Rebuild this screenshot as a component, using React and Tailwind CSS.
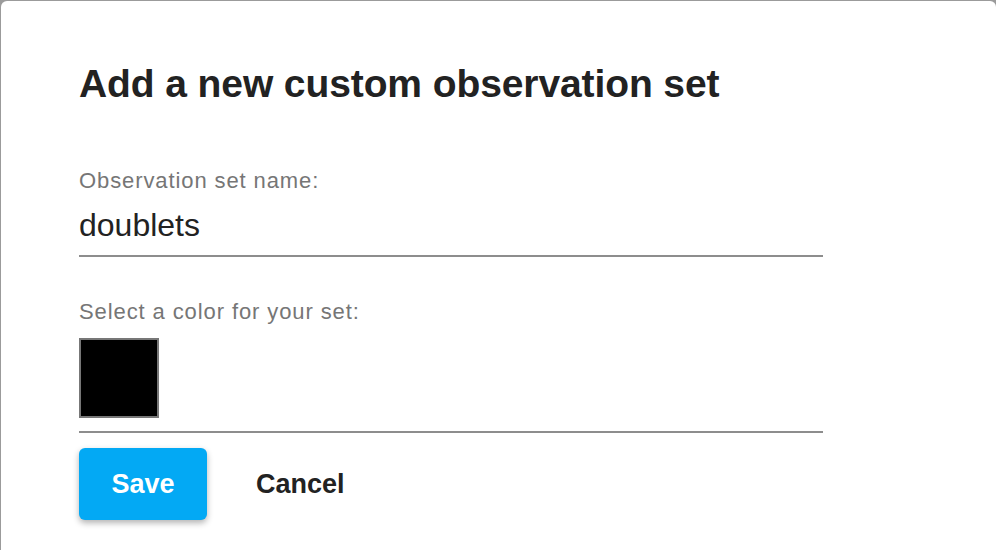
export default function App() {
  return (
    <div className="w-[996px] h-[550px] overflow-hidden bg-[#9b9b9b] pt-px pl-px" style={{ fontFamily: '"Liberation Sans", Arial, sans-serif' }}>
      <div className="w-[995px] h-[560px] bg-white rounded-[6px] pl-[78px] pt-[58px]">
        <h1 className="text-[39px] leading-[50px] font-bold text-[#222] tracking-[-0.1px]">Add a new custom observation set</h1>
        <div className="w-[744px] mt-[59px]">
          <div className="text-[22px] leading-[26px] text-[#767676] tracking-[0.9px]">Observation set name:</div>
          <div className="text-[32px] leading-[40px] text-[#222] mt-[11px] pb-[10px] border-b-2 border-[#8d8d8d]">doublets</div>
          <div className="text-[22px] leading-[26px] text-[#767676] tracking-[0.9px] mt-[42px]">Select a color for your set:</div>
          <div className="pt-[13px] pb-[13px] border-b-2 border-[#8d8d8d]">
            <div className="w-[80px] h-[80px] bg-black border-2 border-[#777]"></div>
          </div>
        </div>
        <div className="flex items-center mt-[15px]">
          <button className="w-[128px] h-[72px] rounded-[6px] bg-[#03a9f4] text-white text-[27px] font-bold shadow-[0_3px_6px_rgba(0,0,0,0.3)]">Save</button>
          <button className="ml-[49px] text-[27px] text-[#222] font-bold px-0">Cancel</button>
        </div>
      </div>
    </div>
  );
}
